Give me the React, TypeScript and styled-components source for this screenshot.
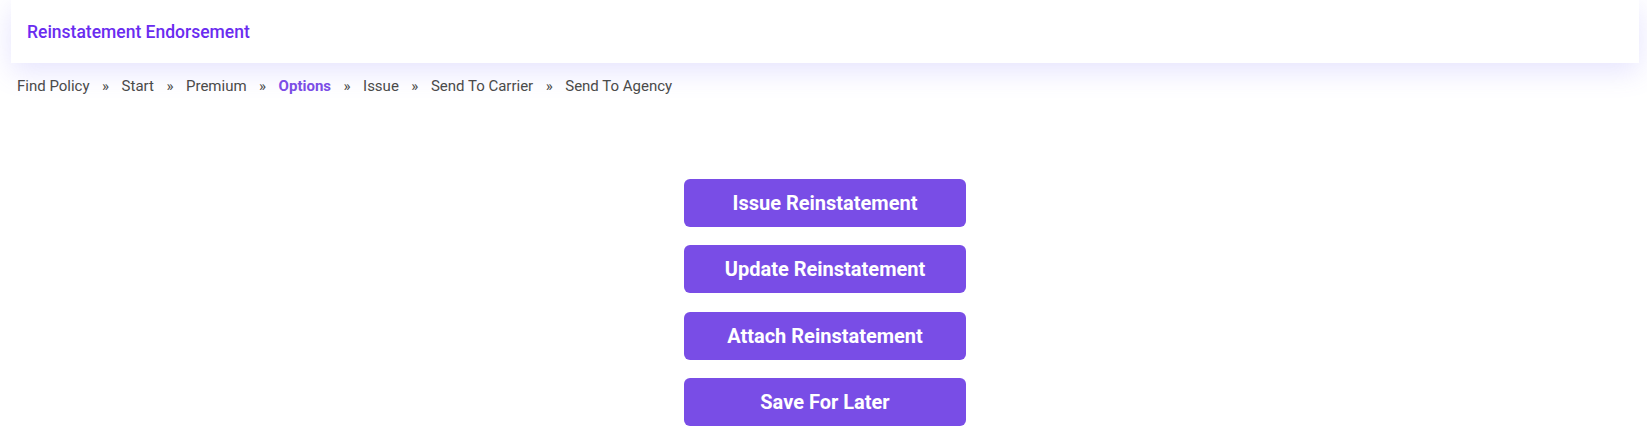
import styled, { createGlobalStyle } from "styled-components";

const GlobalStyle = createGlobalStyle`
    body {
        margin: 0;
        background: #ffffff;
        font-family: Roboto, "Liberation Sans", sans-serif;
    }
`

const Page = styled.div`
    padding: 0 8px 0 11px;
`

const HeaderCard = styled.header`
    height: 63px;
    display: flex;
    align-items: center;
    padding: 0 16px;
    background: #ffffff;
    box-shadow: 0 8px 28px rgba(110, 100, 250, 0.18);
`

const Title = styled.h1`
    margin: 0;
    font-size: 17.5px;
    font-weight: 500;
    color: #6a2cf0;
`

const Breadcrumb = styled.nav`
    display: flex;
    align-items: center;
    margin-top: 13px;
    padding-left: 6px;
    height: 20px;
    font-size: 15px;
    color: #4a4a4a;
`

const Crumb = styled.span<{ $active?: boolean }>`
    font-weight: ${p => (p.$active ? 700 : 400)};
    color: ${p => (p.$active ? "#7b4de6" : "#4a4a4a")};
`

const Separator = styled.span`
    margin: 0 12.5px;
    color: #4a4a4a;
`

const ButtonStack = styled.div`
    display: flex;
    flex-direction: column;
    align-items: center;
    gap: 18.3px;
    margin-top: 83px;
`

const ActionButton = styled.button`
    width: 282px;
    height: 48px;
    border: none;
    border-radius: 6px;
    background: #794de6;
    color: #ffffff;
    font-family: Roboto, "Liberation Sans", sans-serif;
    font-size: 20px;
    font-weight: 700;
    cursor: pointer;
`

const steps = ["Find Policy", "Start", "Premium", "Options", "Issue", "Send To Carrier", "Send To Agency"]
const actions = ["Issue Reinstatement", "Update Reinstatement", "Attach Reinstatement", "Save For Later"]

export default function App() {
  return (
    <>
      <GlobalStyle />
      <Page>
        <HeaderCard>
          <Title>Reinstatement Endorsement</Title>
        </HeaderCard>

        <Breadcrumb>
          {steps.map((s, i) => (
            <span key={s}>
              {i > 0 && <Separator>»</Separator>}
              <Crumb $active={s === "Options"}>{s}</Crumb>
            </span>
          ))}
        </Breadcrumb>

        <ButtonStack>
          {actions.map(a => (
            <ActionButton key={a}>{a}</ActionButton>
          ))}
        </ButtonStack>
      </Page>
    </>
  )
}
